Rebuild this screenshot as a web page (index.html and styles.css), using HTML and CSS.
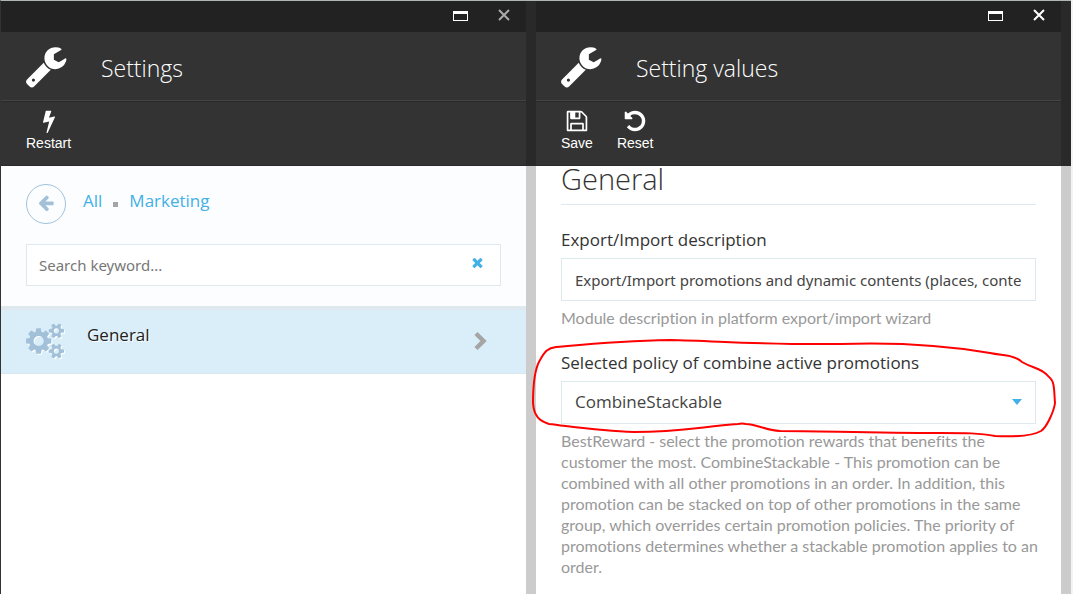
FILE: index.html
```html
<!DOCTYPE html>
<html lang="en">
<head>
<meta charset="utf-8">
<title>Settings</title>
<link rel="stylesheet" href="styles.css">
</head>
<body>
<svg class="symbols" aria-hidden="true">
  <symbol id="wrench" viewBox="0 0 1792 1792"><path d="M448 1472q0-26-19-45t-45-19-45 19-19 45 19 45 45 19 45-19 19-45zm644-420l-682 682q-37 37-90 37-52 0-91-37l-106-108q-38-36-38-90 0-53 38-91l681-681q39 98 114.500 173.500t173.500 114.500zm634-435q0 39-23 106-47 134-164.500 217.500t-258.500 83.500q-185 0-316.500-131.500t-131.500-316.500 131.500-316.500 316.500-131.500q58 0 121.500 16.500t107.500 46.500q16 11 16 28t-16 28l-293 169v224l193 107q5-3 79-48.500t135.500-81 70.500-35.500q15 0 23.500 10t8.500 25z"/></symbol>
  <symbol id="maximize" viewBox="0 0 15 10"><path fill-rule="evenodd" d="M0 0h15v10H0zM1 3v6h13V3z"/></symbol>
  <symbol id="close" viewBox="0 0 12 12"><path d="M1 1L11 11M11 1L1 11" fill="none" stroke="currentColor" stroke-width="2"/></symbol>
</svg>
<main class="workspace">
  <section class="blade">
    <header class="blade-header">
      <div class="window-bar">
        <button class="window-button" type="button" aria-label="Maximize"><svg class="icon-maximize"><use href="#maximize"/></svg></button>
        <button class="window-button window-button-dim" type="button" aria-label="Close"><svg class="icon-close"><use href="#close"/></svg></button>
      </div>
      <div class="title-bar">
        <svg class="icon-title"><use href="#wrench"/></svg>
        <h1 class="title">Settings</h1>
      </div>
      <div class="toolbar">
        <button class="tool" type="button">
          <svg class="icon-tool" viewBox="0 0 1792 1792"><path d="M1333 566q18 20 7 44l-540 1157q-13 25-42 25-4 0-14-2-17-5-25.500-19t-4.500-30l197-808-406 101q-4 1-12 1-18 0-31-11-18-15-13-39l201-825q4-14 16-23t28-9h328q19 0 32 12.500t13 29.500q0 8-5 18l-171 463 396-98q8-2 12-2 19 0 34 15z"/></svg>
          <span>Restart</span>
        </button>
      </div>
    </header>
    <div class="static-area">
      <nav class="breadcrumbs" aria-label="Breadcrumbs">
        <button class="back" type="button" aria-label="Back"><svg class="icon-back" viewBox="0 0 1792 1792"><path d="M1664 896v128q0 53-32.500 90.500t-84.500 37.500h-704l293 294q38 36 38 90t-38 90l-75 76q-37 37-90 37-52 0-91-37l-651-652q-37-37-37-90 0-52 37-91l651-650q38-38 91-38 52 0 90 38l75 74q38 38 38 91t-38 91l-293 293h704q52 0 84.500 37.500t32.500 90.500z" transform="translate(0 -128)"/></svg></button>
        <div class="crumbs"><a href="#all">All</a><span class="crumb-dot"></span><a href="#marketing">Marketing</a></div>
      </nav>
      <div class="search">
        <input class="search-input" type="text" placeholder="Search keyword..." aria-label="Search keyword">
        <button class="search-clear" type="button" aria-label="Clear"><svg class="icon-clear" viewBox="0 0 1792 1792"><path d="M1490 1322q0 40-28 68l-136 136q-28 28-68 28t-68-28l-294-294-294 294q-28 28-68 28t-68-28l-136-136q-28-28-28-68t28-68l294-294-294-294q-28-28-28-68t28-68l136-136q28-28 68-28t68 28l294 294 294-294q28-28 68-28t68 28l136 136q28 28 28 68t-28 68l-294 294 294 294q28 28 28 68z"/></svg></button>
      </div>
    </div>
    <a class="list-item" href="#general">
      <svg class="icon-cogs" viewBox="0 0 1920 1792"><path d="M896 896q0-106-75-181t-181-75-181 75-75 181 75 181 181 75 181-75 75-181zm768 512q0-52-38-90t-90-38-90 38-38 90q0 53 37.500 90.500t90.500 37.500 90.500-37.500 37.500-90.500zm0-1024q0-52-38-90t-90-38-90 38-38 90q0 53 37.500 90.500t90.500 37.500 90.500-37.500 37.500-90.500zm-384 421v185q0 10-7 19.500t-16 10.500l-155 24q-11 35-32 76 34 48 90 115 7 11 7 20 0 12-7 19-23 30-82.500 89.500t-78.500 59.500q-11 0-21-7l-115-90q-37 19-77 31-11 108-23 155-7 24-30 24h-186q-11 0-20-7.500t-10-17.500l-23-153q-34-10-75-31l-118 89q-7 7-20 7-11 0-21-8-144-133-144-160 0-9 7-19 10-14 41-53t47-61q-23-44-35-82l-152-24q-10-1-17-9.500t-7-19.500v-185q0-10 7-19.500t16-10.500l155-24q11-35 32-76-34-48-90-115-7-11-7-20 0-12 7-20 22-30 82-89t79-59q11 0 21 7l115 90q34-18 77-32 11-108 23-154 7-24 30-24h186q11 0 20 7.500t10 17.500l23 153q34 10 75 31l118-89q8-7 20-7 11 0 21 8 144 133 144 160 0 8-7 19-12 16-42 54t-45 60q23 48 34 82l152 23q10 2 17 10.500t7 19.500zm640 533v140q0 16-149 31-12 27-30 52 51 113 51 138 0 4-4 7-122 71-124 71-8 0-46-47t-52-68q-20 2-30 2t-30-2q-14 21-52 68t-46 47q-2 0-124-71-4-3-4-7 0-25 51-138-18-25-30-52-149-15-149-31v-140q0-16 149-31 13-29 30-52-51-113-51-138 0-4 4-7 4-2 35-20t59-34 30-16q8 0 46 46.500t52 67.500q20-2 30-2t30 2q51-71 92-112l6-2q4 0 124 70 4 3 4 7 0 25-51 138 17 23 30 52 149 15 149 31zm0-1024v140q0 16-149 31-12 27-30 52 51 113 51 138 0 4-4 7-122 71-124 71-8 0-46-47t-52-68q-20 2-30 2t-30-2q-14 21-52 68t-46 47q-2 0-124-71-4-3-4-7 0-25 51-138-18-25-30-52-149-15-149-31v-140q0-16 149-31 13-29 30-52-51-113-51-138 0-4 4-7 4-2 35-20t59-34 30-16q8 0 46 46.500t52 67.500q20-2 30-2t30 2q51-71 92-112l6-2q4 0 124 70 4 3 4 7 0 25-51 138 17 23 30 52 149 15 149 31z"/></svg>
      <span class="list-label">General</span>
      <svg class="icon-chevron" viewBox="0 0 14 20"><path d="M2 2.500L9.500 10L2 17.500" fill="none" stroke="currentColor" stroke-width="4.500"/></svg>
    </a>
  </section>
  <section class="blade">
    <header class="blade-header">
      <div class="window-bar">
        <button class="window-button" type="button" aria-label="Maximize"><svg class="icon-maximize"><use href="#maximize"/></svg></button>
        <button class="window-button" type="button" aria-label="Close"><svg class="icon-close"><use href="#close"/></svg></button>
      </div>
      <div class="title-bar">
        <svg class="icon-title"><use href="#wrench"/></svg>
        <h1 class="title">Setting values</h1>
      </div>
      <div class="toolbar">
        <button class="tool" type="button">
          <svg class="icon-tool" viewBox="0 0 1792 1792"><path d="M512 1536h768v-384h-768v384zm896 0h128v-896q0-14-10-38.500t-20-34.500l-281-281q-10-10-34-20t-39-10v416q0 40-28 68t-68 28h-576q-40 0-68-28t-28-68v-416h-128v1280h128v-416q0-40 28-68t68-28h832q40 0 68 28t28 68v416zm-384-928v-320q0-13-9.500-22.500t-22.500-9.500h-192q-13 0-22.500 9.500t-9.500 22.500v320q0 13 9.500 22.500t22.500 9.500h192q13 0 22.500-9.500t9.500-22.500zm640 32v928q0 40-28 68t-68 28h-1344q-40 0-68-28t-28-68v-1344q0-40 28-68t68-28h928q40 0 88 20t76 48l280 280q28 28 48 76t20 88z"/></svg>
          <span>Save</span>
        </button>
        <button class="tool" type="button">
          <svg class="icon-tool" viewBox="0 0 1792 1792"><path d="M1664 896q0 156-61 298t-164 245-245 164-298 61q-172 0-327-72.500t-264-204.500q-7-10-6.500-22.500t8.500-20.500l137-138q10-9 25-9 16 2 23 12 73 95 179 147t225 52q104 0 198.500-40.500t163.500-109.500 109.500-163.500 40.500-198.500-40.500-198.500-109.500-163.500-163.500-109.500-198.500-40.500q-98 0-188 35.500t-160 101.500l137 138q31 30 14 69-17 40-59 40h-448q-26 0-45-19t-19-45v-448q0-42 40-59 39-17 69 14l130 129q107-101 244.500-156.500t284.500-55.500q156 0 298 61t245 164 164 245 61 298z"/></svg>
          <span>Reset</span>
        </button>
      </div>
    </header>
    <form class="form">
      <h2 class="form-title">General</h2>
      <div class="field">
        <label class="field-label" for="description">Export/Import description</label>
        <input class="field-control" id="description" type="text" value="Export/Import promotions and dynamic contents (places, content items)">
        <p class="field-hint">Module description in platform export/import wizard</p>
      </div>
      <div class="field">
        <label class="field-label" for="policy">Selected policy of combine active promotions</label>
        <div class="select-wrap">
          <select class="field-control field-select" id="policy">
            <option>CombineStackable</option>
            <option>BestReward</option>
          </select>
        </div>
        <p class="field-hint">BestReward - select the promotion rewards that benefits the customer the most. CombineStackable - This promotion can be combined with all other promotions in an order. In addition, this promotion can be stacked on top of other promotions in the same group, which overrides certain promotion policies. The priority of promotions determines whether a stackable promotion applies to an order.</p>
        <svg class="marker" viewBox="530 336 528 104" aria-hidden="true"><path d="M738 424C700 427 678 432 634 432C600 431 575 427 549 424C540 421 534 417 533 403C533 388 534 370 540 360C545 351 548 348 556 347C590 344 620 341 670 340C720 341 760 345 840 344C900 342 950 346 990 353C1005 356 1014 355 1022 362C1034 369 1042 368 1049 377C1055 381 1054 392 1055 403C1054 411 1047 427 1041 431C1032 436 1015 437 995 436C980 433 965 433 940 433C870 433 820 431 780 431C765 430 756 424 746 424Q742 423 738 424"/></svg>
      </div>
    </form>
  </section>
</main>
</body>
</html>
```
FILE: styles.css
```css
* { box-sizing: border-box; }
body {
  margin: 0;
  background: #eff5f7;
  color: #333;
  font-family: "Open Sans", "Noto Sans", sans-serif;
  font-size: 16px;
}
button, input, select { font: inherit; color: inherit; }
button { padding: 0; border: 0; background: none; cursor: pointer; }
a { color: #43b0e6; text-decoration: none; }
svg { display: block; fill: currentColor; flex: none; }
.symbols { position: absolute; width: 0; height: 0; }

.workspace {
  display: flex;
  min-height: 100vh;
  margin-right: 2px;
  border-top: 1px solid #b0b5b5;
  border-left: 1px solid #333;
}
.blade {
  flex: 1;
  min-width: 0;
  background: #fff;
  border-right: 10px solid #ccc;
}
.blade-header {
  margin-right: -10px;
  border-right: 10px solid #292929;
  border-bottom: 1px solid #2b292c;
  background: #333;
  color: #fff;
}
.window-bar {
  display: flex;
  justify-content: flex-end;
  align-items: center;
  gap: 30px;
  height: 31px;
  padding: 0 16px 4px;
  background: #222;
}
.window-button-dim { color: #aaa; }
.icon-maximize { width: 15px; height: 10px; margin-top: 2px; }
.icon-close { width: 12px; height: 12px; }
.title-bar {
  display: flex;
  align-items: center;
  gap: 33px;
  height: 69px;
  padding: 0 23px;
  border-bottom: 1px solid #444;
}
.icon-title { width: 44px; height: 44px; }
.title { margin: 0; padding-top: 4px; font-size: 23px; font-weight: 300; line-height: 28px; }
.toolbar {
  display: flex;
  gap: 24px;
  height: 64px;
  padding: 8px 25px;
  box-shadow: inset 0 1px #292929;
}
.tool {
  display: flex;
  flex-direction: column;
  align-items: center;
  gap: 1px;
  font-family: "Liberation Sans", Arial, sans-serif;
  font-size: 14px;
  line-height: 18px;
}
.icon-tool { width: 24px; height: 24px; }

.static-area { padding: 18px 25px 20px; background: #fcfdff; }
.breadcrumbs { display: flex; gap: 17px; margin-bottom: 20px; }
.back {
  display: grid;
  place-items: center;
  width: 40px;
  height: 40px;
  border: 1px solid #a2c1d8;
  border-radius: 50%;
  color: #a2c1d8;
}
.icon-back { width: 18px; height: 18px; }
.crumbs { display: flex; align-items: center; height: 32px; font-size: 17px; }
.crumb-dot { width: 5px; height: 5px; margin: 9px 11px 0; background: #a5a5a5; }
.search {
  display: flex;
  align-items: center;
  height: 42px;
  padding: 0 15px 0 12px;
  border: 1px solid #dde9ef;
  background: #fff;
}
.search-input { flex: 1; min-width: 0; padding: 0; border: 0; outline: 0; background: none; font-family: "Noto Sans", sans-serif; font-size: 15px; }
.search-input::placeholder { color: #777; opacity: 1; }
.search-clear { padding-bottom: 5px; color: #43b0e6; }
.icon-clear { width: 15px; height: 15px; }
.list-item {
  display: flex;
  align-items: center;
  gap: 23px;
  padding: 9px 38px 11px 25px;
  border-top: 4px solid #dfe8ef;
  border-bottom: 1px solid #d8e8f0;
  background: #d9eef9;
  color: #222;
}
.icon-cogs { width: 38px; height: 36px; color: #a2c1d8; filter: drop-shadow(1px 1px 0 #fff); }
.list-label { flex: 1; padding-bottom: 12px; font-size: 17px; line-height: 31px; text-shadow: 1px 1px #fff; }
.icon-chevron { width: 14px; height: 20px; color: #a5a5a5; }

.form { padding: 0 25px; }
.form-title {
  margin: 0 0 22px;
  padding-bottom: 12px;
  border-bottom: 1px solid #dde9ef;
  font-size: 29px;
  font-weight: 300;
  line-height: 26px;
}
.field { position: relative; margin-bottom: 22px; }
.field-label { display: block; margin-bottom: 6px; font-size: 17px; line-height: 25px; }
.field-control {
  display: block;
  width: 100%;
  height: 43px;
  padding: 0 13px;
  border: 1px solid #dde9ef;
  border-radius: 0;
  outline: 0;
  background: #fff;
  color: #444;
  font-family: "Noto Sans", sans-serif;
  font-size: 15px;
}
.select-wrap { position: relative; }
.select-wrap::after {
  content: "";
  position: absolute;
  top: 18px;
  right: 14px;
  border: 5px solid transparent;
  border-top: 6px solid #43b0e6;
  border-bottom: 0;
  pointer-events: none;
}
.field-select { appearance: none; padding-bottom: 2px; font-family: "Open Sans", sans-serif; font-size: 17px; }
.field-hint {
  margin: 6px -8px 0 0;
  color: #999;
  font-family: Lato, sans-serif;
  font-size: 16px;
  font-variant-ligatures: none;
  line-height: 21px;
}
.marker {
  position: absolute;
  top: -14px;
  left: -31px;
  width: calc(100% + 53px);
  fill: none;
  stroke: #f00;
  stroke-width: 2;
  pointer-events: none;
}
```
